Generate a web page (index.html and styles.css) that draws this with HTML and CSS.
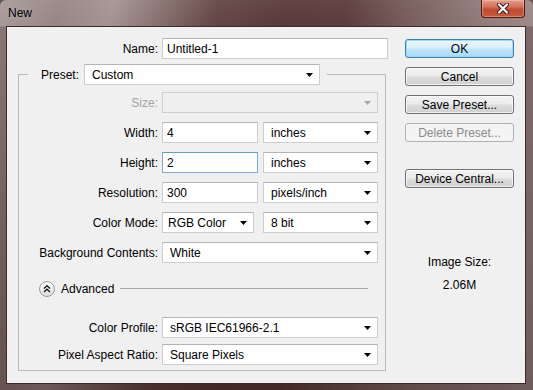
FILE: index.html
```html
<!DOCTYPE html>
<html lang="en">
<head>
    <meta charset="UTF-8">
    <meta name="viewport" content="width=device-width, initial-scale=1.0">
    <title>New</title>
    <link rel="stylesheet" href="styles.css">
</head>
<body>
    <div class="window">
        <div class="titlebar">
            <span class="title">New</span>
            <button class="close" type="button" aria-label="Close">
                <svg width="12" height="11" viewBox="0 0 12 11">
                    <path d="M2 1.5 L10 9.5 M10 1.5 L2 9.5" stroke="#3b1a14" stroke-width="4" stroke-linecap="round" fill="none"/>
                    <path d="M2 1.5 L10 9.5 M10 1.5 L2 9.5" stroke="#ffffff" stroke-width="2.2" stroke-linecap="round" fill="none"/>
                </svg>
            </button>
        </div>

        <div class="client">
            <div class="form">
                <div class="row row--name">
                    <span class="label">Name:</span>
                    <input class="field" type="text" value="Untitled-1">
                </div>

                <fieldset class="group">
                    <legend class="legend">
                        <span class="legend-label">Preset:</span>
                        <div class="combo combo--preset">
                            <span>Custom</span>
                            <svg class="arrow" width="7" height="4" viewBox="0 0 7 4"><polygon points="0,0 7,0 3.5,4"/></svg>
                        </div>
                    </legend>

                    <div class="rows">
                        <div class="row">
                            <span class="label label--disabled">Size:</span>
                            <div class="combo combo--disabled">
                                <span></span>
                                <svg class="arrow" width="7" height="4" viewBox="0 0 7 4"><polygon points="0,0 7,0 3.5,4"/></svg>
                            </div>
                        </div>
                        <div class="row">
                            <span class="label">Width:</span>
                            <div class="pair">
                                <input class="field field--num" type="text" value="4">
                                <div class="combo combo--unit">
                                    <span>inches</span>
                                    <svg class="arrow" width="7" height="4" viewBox="0 0 7 4"><polygon points="0,0 7,0 3.5,4"/></svg>
                                </div>
                            </div>
                        </div>
                        <div class="row">
                            <span class="label">Height:</span>
                            <div class="pair">
                                <input class="field field--num field--focus" type="text" value="2">
                                <div class="combo combo--unit">
                                    <span>inches</span>
                                    <svg class="arrow" width="7" height="4" viewBox="0 0 7 4"><polygon points="0,0 7,0 3.5,4"/></svg>
                                </div>
                            </div>
                        </div>
                        <div class="row">
                            <span class="label">Resolution:</span>
                            <div class="pair">
                                <input class="field field--num" type="text" value="300">
                                <div class="combo combo--unit">
                                    <span>pixels/inch</span>
                                    <svg class="arrow" width="7" height="4" viewBox="0 0 7 4"><polygon points="0,0 7,0 3.5,4"/></svg>
                                </div>
                            </div>
                        </div>
                        <div class="row">
                            <span class="label">Color Mode:</span>
                            <div class="pair">
                                <div class="combo combo--mode">
                                    <span>RGB Color</span>
                                    <svg class="arrow" width="7" height="4" viewBox="0 0 7 4"><polygon points="0,0 7,0 3.5,4"/></svg>
                                </div>
                                <div class="combo combo--unit">
                                    <span>8 bit</span>
                                    <svg class="arrow" width="7" height="4" viewBox="0 0 7 4"><polygon points="0,0 7,0 3.5,4"/></svg>
                                </div>
                            </div>
                        </div>
                        <div class="row">
                            <span class="label">Background Contents:</span>
                            <div class="combo">
                                <span>White</span>
                                <svg class="arrow" width="7" height="4" viewBox="0 0 7 4"><polygon points="0,0 7,0 3.5,4"/></svg>
                            </div>
                        </div>
                    </div>

                    <div class="advanced">
                        <svg class="advanced-icon" width="16" height="16" viewBox="0 0 16 16">
                            <defs>
                                <linearGradient id="knob" x1="0" y1="0" x2="0" y2="1">
                                    <stop offset="0" stop-color="#ffffff"/>
                                    <stop offset="1" stop-color="#dcdcdc"/>
                                </linearGradient>
                            </defs>
                            <circle cx="8" cy="8" r="7.5" fill="url(#knob)" stroke="#9c9c9c"/>
                            <path d="M5 7.5 L8 4.8 L11 7.5 M5 11 L8 8.3 L11 11" fill="none" stroke="#1e1e1e" stroke-width="1.5"/>
                        </svg>
                        <span class="advanced-text">Advanced</span>
                        <span class="advanced-line"></span>
                    </div>

                    <div class="rows rows--tight">
                        <div class="row">
                            <span class="label">Color Profile:</span>
                            <div class="combo">
                                <span>sRGB IEC61966-2.1</span>
                                <svg class="arrow" width="7" height="4" viewBox="0 0 7 4"><polygon points="0,0 7,0 3.5,4"/></svg>
                            </div>
                        </div>
                        <div class="row">
                            <span class="label">Pixel Aspect Ratio:</span>
                            <div class="combo">
                                <span>Square Pixels</span>
                                <svg class="arrow" width="7" height="4" viewBox="0 0 7 4"><polygon points="0,0 7,0 3.5,4"/></svg>
                            </div>
                        </div>
                    </div>
                </fieldset>
            </div>

            <div class="side">
                <button class="button button--default" type="button">OK</button>
                <button class="button" type="button">Cancel</button>
                <button class="button" type="button">Save Preset...</button>
                <button class="button" type="button" disabled>Delete Preset...</button>
                <button class="button button--spaced" type="button">Device Central...</button>
                <div class="image-size">
                    <span>Image Size:</span>
                    <span>2.06M</span>
                </div>
            </div>
        </div>
    </div>
</body>
</html>
```

FILE: styles.css
```css
* {
    box-sizing: border-box;
}
body {
    margin: 0;
    font-family: "Liberation Sans", Arial, sans-serif;
    font-size: 12px;
    color: #000;
    background: #6e5654;
}
.window {
    width: 533px;
    height: 390px;
    display: flex;
    flex-direction: column;
    padding: 0 7px 6px 6px;
    border-radius: 6px 6px 0 0;
    background:
        linear-gradient(to bottom, rgba(255, 255, 255, 0.06) 0, rgba(255, 255, 255, 0) 26px, rgba(40, 18, 16, 0.25) 27px, rgba(40, 18, 16, 0.45) 100%),
        linear-gradient(100deg, #a99b9a 0%, #968584 10%, #a39392 19%, #86706e 27%, #644644 36%, #583937 48%, #5b3c3a 58%, #765b59 68%, #8e7a78 80%, #9c8a88 90%, #a89a98 100%);
}
.titlebar {
    height: 26px;
    display: flex;
    justify-content: space-between;
    align-items: flex-start;
    padding-left: 2px;
}
.title {
    margin-top: 6px;
    font-size: 12px;
    color: #000;
    text-shadow: 0 0 6px rgba(255, 255, 255, 0.35);
}
.close {
    width: 44px;
    height: 18px;
    margin-right: 1px;
    padding: 0;
    display: flex;
    align-items: center;
    justify-content: center;
    border: 1px solid #4a1c15;
    border-top: none;
    border-radius: 0 0 4px 4px;
    background: linear-gradient(to bottom, #e3a08f 0%, #d3735d 40%, #c24a31 55%, #cb5a3c 100%);
    box-shadow: inset 0 0 0 1px rgba(255, 220, 200, 0.35);
}
.client {
    flex: 1;
    display: grid;
    grid-template-columns: 370px 109px;
    column-gap: 17px;
    align-items: start;
    padding: 11px 10px 0 11px;
    border: 1px solid #3f2b29;
    background: #f0f0f0;
}

/* left form */
.row {
    display: grid;
    grid-template-columns: 139px 216px;
    column-gap: 4px;
    height: 21px;
}
.row--name {
    grid-template-columns: 140px 226px;
}
.label {
    display: flex;
    align-items: center;
    justify-content: flex-end;
    white-space: nowrap;
}
.label--disabled {
    color: #a3a3a3;
}
.field {
    height: 21px;
    width: 100%;
    margin: 0;
    padding: 0 4px;
    font-family: inherit;
    font-size: 12px;
    color: #000;
    background: #fff;
    border: 1px solid #cdcdcd;
    border-top-color: #b4b4b4;
    outline: none;
}
.field--num {
    width: 96px;
}
.field--focus {
    border-color: #7ea9d6;
    border-top-color: #6c98c8;
}
.combo {
    height: 21px;
    width: 100%;
    display: flex;
    align-items: center;
    justify-content: space-between;
    padding: 0 6px 0 7px;
    background: #fff;
    border: 1px solid #cdcdcd;
    border-top-color: #b4b4b4;
    white-space: nowrap;
}
.combo--preset {
    width: 236px;
}
.combo--unit {
    width: 115px;
}
.combo--mode {
    width: 92px;
    padding-left: 5px;
}
.combo--disabled {
    background: #efefef;
    border-color: #cfcfcf;
}
.combo--disabled .arrow {
    fill: #a7a7a7;
}
.arrow {
    flex: none;
    margin-top: 1px;
    fill: #000;
}
.pair {
    display: flex;
    justify-content: space-between;
}
.group {
    width: 368px;
    min-width: 0;
    margin: 5px 0 0;
    padding: 7px 7px 5px 0;
    border: 1px solid #bcbcbc;
}
.legend {
    display: flex;
    align-items: center;
    margin-left: 9px;
    padding: 0 7px 0 13px;
}
.legend-label {
    margin-right: 5px;
}
.rows {
    display: grid;
    row-gap: 9px;
}
.rows--tight {
    row-gap: 6px;
    margin-top: 21px;
}
.advanced {
    height: 15px;
    margin: 18px 10px 0 20px;
    display: flex;
    align-items: center;
}
.advanced-icon {
    flex: none;
}
.advanced-text {
    margin: 0 6px 0 6px;
}
.advanced-line {
    flex: 1;
    height: 1px;
    background: #a9a9a9;
}

/* right column */
.side {
    display: flex;
    flex-direction: column;
    gap: 9px;
    padding-top: 1px;
}
.button {
    height: 19px;
    width: 109px;
    padding: 0;
    font-family: inherit;
    font-size: 12px;
    color: #000;
    border: 1px solid #707070;
    border-radius: 3px;
    background: linear-gradient(to bottom, #f2f2f2 0%, #ebebeb 48%, #dddddd 52%, #cfcfcf 100%);
    box-shadow: inset 0 0 0 1px rgba(255, 255, 255, 0.7);
}
.button--default {
    border-color: #3c7fb1;
    background: linear-gradient(to bottom, #eaf6fd 0%, #d9f0fc 48%, #bee6fd 52%, #a7d9f5 100%);
    box-shadow: inset 0 0 0 1px #9ddcf8;
}
.button:disabled {
    color: #8a8a8a;
    border-color: #adb2b5;
    background: #f4f4f4;
    box-shadow: none;
}
.button--spaced {
    margin-top: 18px;
}
.image-size {
    display: flex;
    flex-direction: column;
    align-items: center;
    gap: 8px;
    margin-top: 58px;
    line-height: 15px;
}
```
